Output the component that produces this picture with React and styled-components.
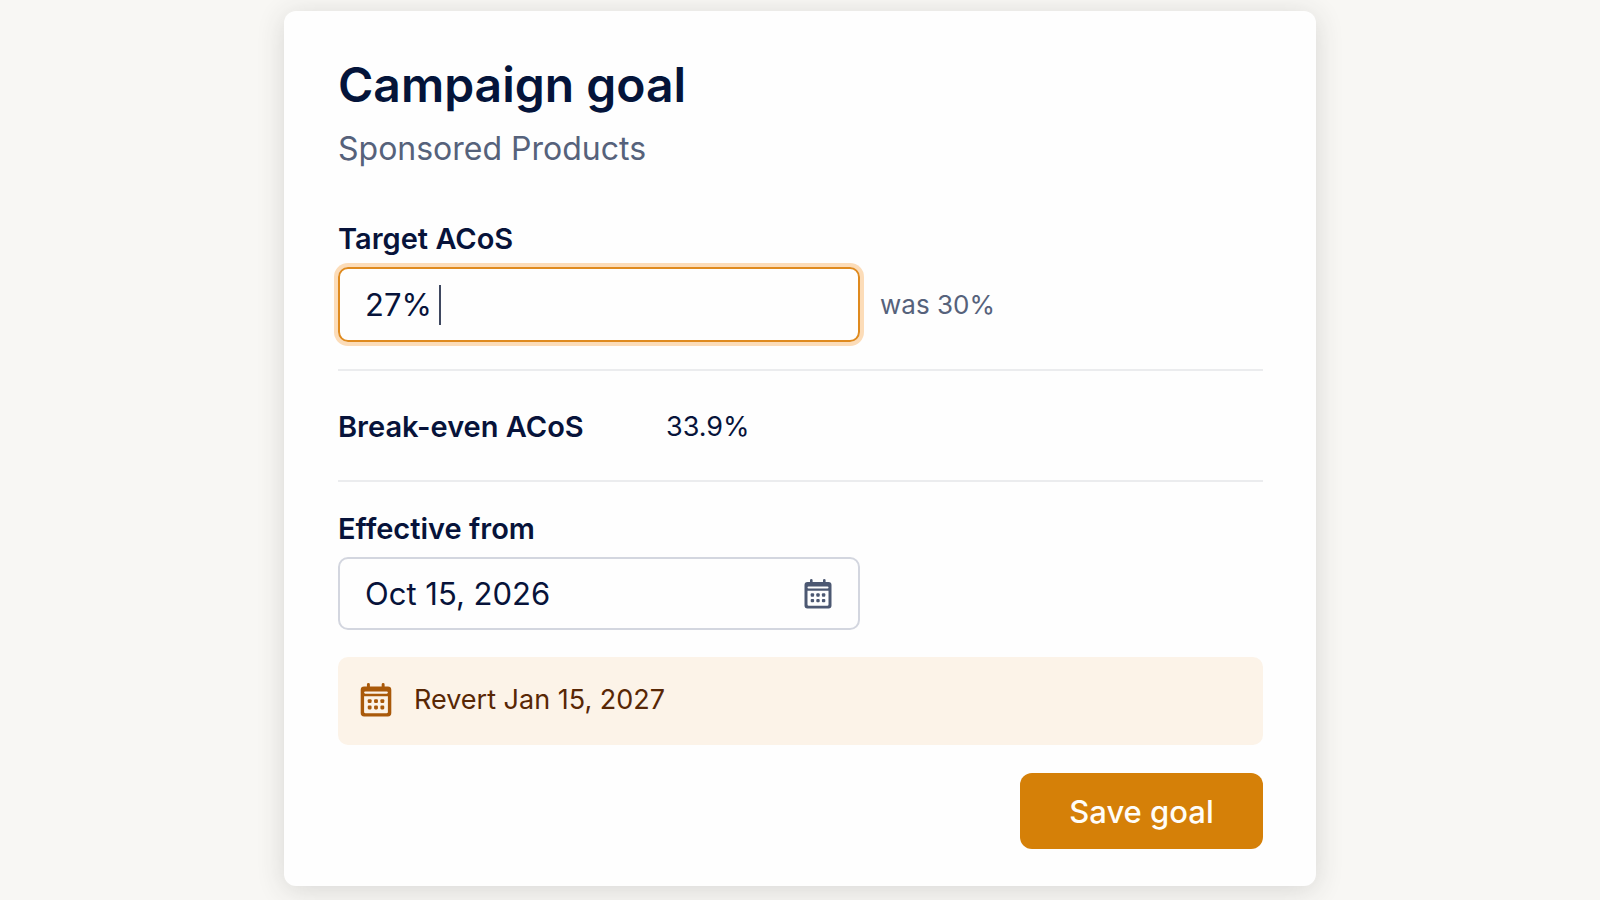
import React, { useState } from "react";
import styled, { createGlobalStyle } from "styled-components";

const GlobalStyle = createGlobalStyle`
  * {
    box-sizing: border-box;
  }

  body {
    margin: 0;
    background: #f8f7f4;
    color: #07133a;
    font-family: Inter, "Liberation Sans", sans-serif;
  }
`;

const Page = styled.main`
  padding: 11px 16px 14px;
`;

const Card = styled.form`
  display: flex;
  flex-direction: column;
  max-width: 1032px;
  margin: 0 auto;
  padding: 44px 53px 37px 54px;
  border-radius: 12px;
  background: #fefefe;
  box-shadow: 0 4px 28px rgba(50, 50, 50, 0.16);
`;

const Title = styled.h1`
  margin: 0 0 14px;
  color: #04143a;
  font-size: 48px;
  font-weight: 600;
  line-height: 60px;
`;

const Subtitle = styled.p`
  margin: 0 0 52px;
  color: #56627b;
  font-size: 32px;
  line-height: 40px;
`;

const Label = styled.label`
  font-size: 29px;
  font-weight: 600;
  line-height: 36px;
`;

const Field = styled.div`
  display: flex;
  flex-direction: column;
  gap: 10px;
`;

const FieldRow = styled.div`
  display: flex;
  align-items: center;
  gap: 20px;
`;

const Box = styled.div`
  display: flex;
  align-items: center;
  flex: 0 1 522px;
  min-width: 0;
  height: ${(props) => (props.$active ? "75px" : "73px")};
  padding: 0 26px 0 25px;
  border: 2px solid ${(props) => (props.$active ? "#df8a1e" : "#d3d6df")};
  border-radius: 10px;
  box-shadow: ${(props) => (props.$active ? "0 0 0 4px #fcdcb8" : "none")};
`;

const Input = styled.input`
  flex: ${(props) => (props.$fit ? "0 1 auto" : "1")};
  field-sizing: ${(props) => (props.$fit ? "content" : "fixed")};
  min-width: 0;
  padding: 0;
  border: 0;
  outline: 0;
  background: transparent;
  color: inherit;
  caret-color: ${(props) => (props.$fit ? "transparent" : "auto")};
  font-family: inherit;
  font-size: 31px;
  line-height: 40px;
`;

const Caret = styled.span`
  width: 2px;
  height: 40px;
  margin-left: 7px;
  background: #3f4860;
`;

const Hint = styled.span`
  color: #56627b;
  font-size: 26px;
  line-height: 36px;
`;

const Divider = styled.hr`
  width: 100%;
  height: 2px;
  margin: ${(props) => props.$space};
  border: 0;
  background: #ebecee;
`;

const Stat = styled.dl`
  display: grid;
  grid-template-columns: 328px 1fr;
  align-items: center;
  margin: 0;
  line-height: 36px;
`;

const StatName = styled.dt`
  font-size: 29px;
  font-weight: 600;
`;

const StatValue = styled.dd`
  margin: 0;
  font-size: 27px;
`;

const IconButton = styled.button`
  display: flex;
  padding: 0;
  border: 0;
  background: none;
  color: #4c5872;
  cursor: pointer;
`;

const Notice = styled.div`
  display: flex;
  align-items: center;
  gap: 22px;
  margin: 27px 0 28px;
  padding: 25px 22px 27px;
  border-radius: 10px;
  background: #fcf3e8;
  color: #582705;
  font-size: 27px;
  line-height: 36px;

  svg {
    color: #a9590a;
  }
`;

const SaveButton = styled.button`
  align-self: flex-end;
  width: 243px;
  height: 76px;
  border: 0;
  border-radius: 12px;
  background: #d58008;
  color: #fffdf8;
  font-family: inherit;
  font-size: 31px;
  font-weight: 500;
  cursor: pointer;
`;

const CalendarIcon = ({ width, height }) => (
  <svg width={width} height={height} viewBox="0 0 28 30" aria-hidden="true">
    <path
      fill="currentColor"
      fillRule="evenodd"
      d="M6 1.3a1.3 1.3 0 0 1 2.6 0V3H19V1.3a1.3 1.3 0 0 1 2.6 0V3H24.5A3 3 0 0 1 27.5 6V26.5A3 3 0 0 1 24.5 29.5H3.5A3 3 0 0 1 0.5 26.5V6A3 3 0 0 1 3.5 3H6ZM4.5 7.4Q3.5 7.4 3.5 8.4T4.5 9.4H23.5Q24.5 9.4 24.5 8.4T23.5 7.4ZM3.5 11.8V25.5Q3.5 26.7 4.7 26.7H23.3Q24.5 26.7 24.5 25.5V11.8Z"
    />
    <g fill="currentColor">
      {[16, 21.6].map((y) =>
        [8.4, 14, 19.6].map((x) => (
          <rect
            key={`${x}-${y}`}
            x={x - 1.7}
            y={y - 1.7}
            width="3.4"
            height="3.4"
            rx="1"
          />
        ))
      )}
    </g>
  </svg>
);

const App = () => {
  const [target, setTarget] = useState("27%");
  const [date, setDate] = useState("Oct 15, 2026");

  return (
    <>
      <GlobalStyle />
      <Page>
        <Card onSubmit={(e) => e.preventDefault()}>
          <Title>Campaign goal</Title>
          <Subtitle>Sponsored Products</Subtitle>

          <Field>
            <Label htmlFor="targetAcos">Target ACoS</Label>
            <FieldRow>
              <Box $active>
                <Input
                  $fit
                  id="targetAcos"
                  type="text"
                  value={target}
                  onChange={(e) => setTarget(e.target.value)}
                />
                <Caret />
              </Box>
              <Hint>was 30%</Hint>
            </FieldRow>
          </Field>

          <Divider $space="27px 0 38px" />
          <Stat>
            <StatName>Break-even ACoS</StatName>
            <StatValue>33.9%</StatValue>
          </Stat>
          <Divider $space="35px 0 29px" />

          <Field>
            <Label htmlFor="effectiveFrom">Effective from</Label>
            <FieldRow>
              <Box>
                <Input
                  id="effectiveFrom"
                  type="text"
                  value={date}
                  onChange={(e) => setDate(e.target.value)}
                />
                <IconButton type="button" aria-label="Choose date">
                  <CalendarIcon width={28} height={30} />
                </IconButton>
              </Box>
            </FieldRow>
          </Field>

          <Notice>
            <CalendarIcon width={32} height={34} />
            Revert Jan 15, 2027
          </Notice>

          <SaveButton type="submit">Save goal</SaveButton>
        </Card>
      </Page>
    </>
  );
};

export default App;
